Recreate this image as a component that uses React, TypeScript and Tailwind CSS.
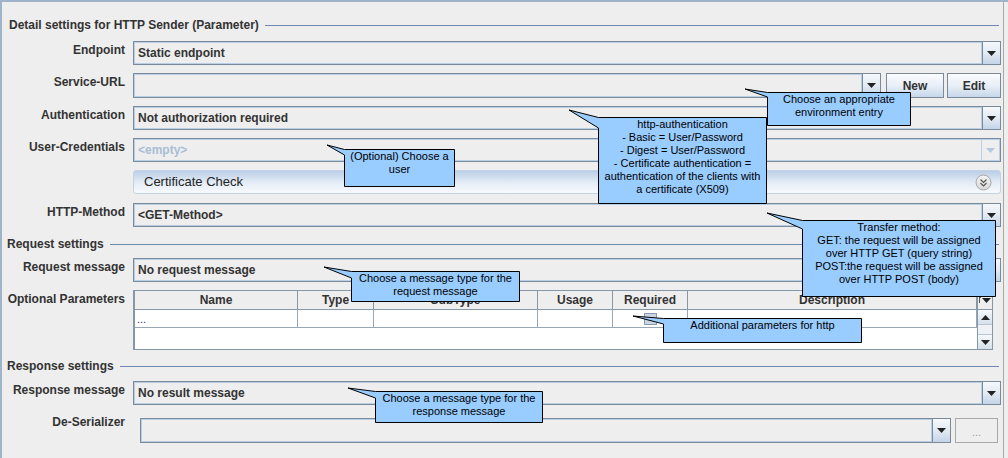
import type { ReactNode } from 'react';

type Callout = {
  box: string;
  l: number;
  t: number;
  r: number;
  b: number;
  tip: [number, number];
  h: number;
  lines: string[];
};

const callouts: Callout[] = [
  {
    box: 'left-[767px] top-[92px] w-[144px] h-[34px]',
    l: 767, t: 92, r: 911, b: 126, tip: [745, 89], h: 5,
    lines: ['Choose an appropriate', 'environment entry']
  },
  {
    box: 'left-[598px] top-[117px] w-[169px] h-[87px]',
    l: 598, t: 117, r: 767, b: 204, tip: [569, 110], h: 11,
    lines: [
      'http-authentication',
      '- Basic = User/Password',
      '- Digest = User/Password',
      '- Certificate authentication =',
      'authentication of the clients with',
      'a certificate (X509)'
    ]
  },
  {
    box: 'left-[344px] top-[149px] w-[111px] h-[38px]',
    l: 344, t: 149, r: 455, b: 187, tip: [327, 145], h: 6,
    lines: ['(Optional) Choose a', 'user']
  },
  {
    box: 'left-[802px] top-[220px] w-[194px] h-[77px]',
    l: 802, t: 220, r: 996, b: 297, tip: [767, 213], h: 9,
    lines: [
      'Transfer method:',
      'GET: the request will be assigned',
      'over HTTP GET (query string)',
      'POST:the request will be assigned',
      'over HTTP POST (body)'
    ]
  },
  {
    box: 'left-[351px] top-[271px] w-[169px] h-[31px]',
    l: 351, t: 271, r: 520, b: 302, tip: [324, 267], h: 7,
    lines: ['Choose a message type for the', 'request message']
  },
  {
    box: 'left-[663px] top-[318px] w-[199px] h-[25px]',
    l: 663, t: 318, r: 862, b: 343, tip: [633, 316], h: 6,
    lines: ['Additional parameters for http']
  },
  {
    box: 'left-[375px] top-[391px] w-[168px] h-[32px]',
    l: 375, t: 391, r: 543, b: 423, tip: [348, 388], h: 7,
    lines: ['Choose a message type for the', 'response message']
  }
];

const columns = [
  { w: 'w-[163px]', name: 'Name' },
  { w: 'w-[76px]', name: 'Type' },
  { w: 'w-[164px]', name: 'SubType' },
  { w: 'w-[75px]', name: 'Usage' },
  { w: 'w-[75px]', name: 'Required' },
  { w: 'w-[289px]', name: 'Description' }
];

function Triangle({ up = false, color = '#222' }: { up?: boolean; color?: string }) {
  return (
    <svg width="9" height="5" viewBox="0 0 9 5">
      <polygon points={up ? '0,5 9,5 4.5,0' : '0,0 9,0 4.5,5'} fill={color} />
    </svg>
  );
}

function Combo({
  text,
  height = 'h-[24px]',
  disabled = false
}: {
  text?: string;
  height?: string;
  disabled?: boolean;
}) {
  return (
    <div className={`flex ${height} w-full border border-[#7a8a99] bg-[#eeeeee]`}>
      <div className="flex flex-1 items-center border border-[#b8cfe5] px-[3px]">
        <span
          className={`text-[12px] font-bold leading-[14px] ${disabled ? 'text-[#a9bdd6]' : 'text-[#333333]'}`}
        >
          {text}
        </span>
      </div>
      {disabled ? (
        <div className="flex w-[18px] items-center justify-center border-y border-r border-[#b8cfe5]">
          <Triangle color="#b3c7de" />
        </div>
      ) : (
        <div className="flex w-[18px] items-center justify-center border-l border-[#7a8a99] bg-linear-to-b from-[#f6f9fc] via-[#e2eaf3] to-[#c4d5e8]">
          <Triangle />
        </div>
      )}
    </div>
  );
}

function Row({
  label,
  className,
  children
}: {
  label: string;
  className: string;
  children: ReactNode;
}) {
  return (
    <div className={`flex pr-[2px] ${className}`}>
      <div className="w-[123px] shrink-0 pt-[1px] text-right text-[12px] font-bold leading-[16px] text-[#333333]">
        {label}
      </div>
      <div className="ml-[8px] flex-1">{children}</div>
    </div>
  );
}

function SectionTitle({ title, className }: { title: string; className: string }) {
  return (
    <div className={`flex items-center pr-[4px] ${className}`}>
      <span className="text-[12px] font-bold leading-[14px] text-[#333333]">{title}</span>
      <div className="ml-[6px] h-px flex-1 bg-[#7088b6]" />
    </div>
  );
}

function Button({ children, width }: { children: ReactNode; width: string }) {
  return (
    <div
      className={`flex h-[25px] ${width} items-center justify-center border border-[#7a8a99] bg-linear-to-b from-[#fbfcfe] via-[#e8eff7] to-[#c6d7ea] text-[12px] font-bold text-[#333333]`}
    >
      {children}
    </div>
  );
}

function ParamTable() {
  return (
    <div className="flex h-[60px] w-[860px] border border-l-2 border-[#8797a8] bg-white">
      <div className="flex w-[842px] flex-col">
        <div className="flex">
          {columns.map((c) => (
            <div
              key={c.name}
              className={`${c.w} h-[19px] border-r border-b border-[#8797a8] bg-[#eeeeee] text-center text-[12px] font-bold leading-[18px] text-[#333333]`}
            >
              {c.name}
            </div>
          ))}
        </div>
        <div className="flex">
          {columns.map((c, i) => (
            <div
              key={c.name}
              className={`${c.w} flex h-[18px] items-center border-r border-b border-[#9aa6b3] bg-white`}
            >
              {i === 0 && (
                <span className="pl-[2px] text-[11px] leading-[10px] text-[#2a2a66]">...</span>
              )}
              {i === 4 && (
                <div className="mx-auto h-[12px] w-[13px] border border-[#8a9aab] bg-[#c9d5e2]" />
              )}
            </div>
          ))}
        </div>
      </div>
      <div className="flex w-[16px] flex-col border-l border-[#8797a8] bg-[#eeeeee]">
        <div className="flex h-[19px] items-center justify-center border-b border-[#8797a8]">
          <div className="flex items-end">
            <div className="mr-[1px] h-[6px] w-[2px] border-t border-l border-[#555]" />
            <Triangle />
          </div>
        </div>
        <div className="flex h-[15px] items-center justify-center border-b border-[#b8c6d4] bg-linear-to-b from-[#f6f9fc] to-[#d4e0ec]">
          <Triangle up />
        </div>
        <div className="flex-1 bg-[#eef2f6]" />
        <div className="flex h-[15px] items-center justify-center border-t border-[#b8c6d4] bg-linear-to-b from-[#f6f9fc] to-[#d4e0ec]">
          <Triangle />
        </div>
      </div>
    </div>
  );
}

export default function App() {
  return (
    <div className="relative h-[458px] w-[1008px] overflow-hidden bg-[#eeeeee] font-['Liberation_Sans',Arial,sans-serif]">
      <div className="h-full border-t-2 border-l-2 border-[#9fb3cb]">
        <div className="flex h-full w-[1002px] flex-col border-r border-[#a8a8a8] pt-[16px]">
          <SectionTitle title="Detail settings for HTTP Sender (Parameter)" className="pl-[7px]" />

          <Row label="Endpoint" className="mt-[9px]">
            <Combo text="Static endpoint" />
          </Row>

          <Row label="Service-URL" className="mt-[8px]">
            <div className="flex">
              <div className="w-[748px]">
                <Combo height="h-[25px]" />
              </div>
              <div className="ml-[5px]">
                <Button width="w-[58px]">New</Button>
              </div>
              <div className="ml-[3px]">
                <Button width="w-[54px]">Edit</Button>
              </div>
            </div>
          </Row>

          <Row label="Authentication" className="mt-[8px]">
            <Combo text="Not authorization required" />
          </Row>

          <Row label="User-Credentials" className="mt-[8px]">
            <Combo text="<empty>" disabled />
          </Row>

          <div className="mt-[8px] flex pr-[2px] pl-[131px]">
            <div className="flex h-[24px] flex-1 items-center justify-between rounded-[3px] border border-[#c3d3e6] bg-linear-to-b from-[#bacee5] via-[#e2ebf5] to-[#f8fafd] pr-[8px] pl-[10px]">
              <span className="text-[13px] leading-[14px] text-[#222222]">Certificate Check</span>
              <svg width="17" height="17" viewBox="0 0 17 17">
                <defs>
                  <linearGradient id="cc" x1="0" y1="0" x2="0" y2="1">
                    <stop offset="0" stopColor="#f4f4f4" />
                    <stop offset="1" stopColor="#d8d8d8" />
                  </linearGradient>
                </defs>
                <circle cx="8.5" cy="8.5" r="7.5" fill="url(#cc)" stroke="#a6a6a6" />
                <polyline points="5.5,5.5 8.5,8.5 11.5,5.5" fill="none" stroke="#555" strokeWidth="1.2" />
                <polyline points="5.5,9 8.5,12 11.5,9" fill="none" stroke="#555" strokeWidth="1.2" />
              </svg>
            </div>
          </div>

          <Row label="HTTP-Method" className="mt-[9px]">
            <Combo text="<GET-Method>" />
          </Row>

          <SectionTitle title="Request settings" className="mt-[10px] pl-[5px]" />

          <Row label="Request message" className="mt-[7px]">
            <Combo text="No request message" />
          </Row>

          <Row label="Optional Parameters" className="mt-[8px]">
            <ParamTable />
          </Row>

          <SectionTitle title="Response settings" className="mt-[9px] pl-[5px]" />

          <Row label="Response message" className="mt-[8px]">
            <Combo text="No result message" />
          </Row>

          <Row label="De-Serializer" className="mt-[8px]">
            <div className="flex pt-[5px] pl-[7px]">
              <div className="w-[811px]">
                <Combo height="h-[25px]" />
              </div>
              <div className="ml-[4px] flex h-[25px] w-[43px] items-end justify-center border border-[#a8a8a8] pb-[5px] text-[11px] leading-[10px] text-[#9a9a9a]">
                ...
              </div>
            </div>
          </Row>
        </div>
      </div>

      <svg className="pointer-events-none absolute inset-0" width="1008" height="458">
        {callouts.map((c, i) => (
          <polygon
            key={i}
            points={`${c.tip[0]},${c.tip[1]} ${c.l + 0.5},${c.t + 0.5} ${c.r - 0.5},${c.t + 0.5} ${c.r - 0.5},${c.b - 0.5} ${c.l + 0.5},${c.b - 0.5} ${c.l + 0.5},${c.t + c.h}`}
            fill="#99ccff"
            stroke="#000000"
            strokeWidth="1"
          />
        ))}
      </svg>
      {callouts.map((c, i) => (
        <div
          key={i}
          className={`absolute ${c.box} pt-[1px] text-center text-[11px] leading-[13px] text-black`}
        >
          {c.lines.map((line) => (
            <div key={line}>{line}</div>
          ))}
        </div>
      ))}
    </div>
  );
}
